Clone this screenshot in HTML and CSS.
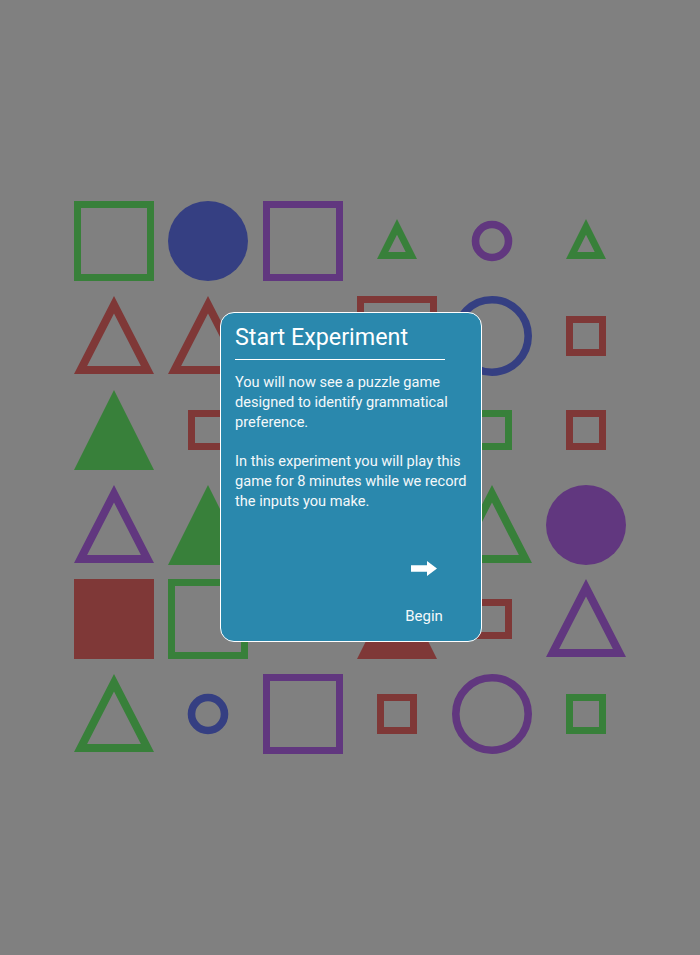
FILE: index.html
```html
<!DOCTYPE html>
<html lang="en">
<head>
<meta charset="utf-8">
<title>Start Experiment</title>
<link rel="stylesheet" href="styles.css">
</head>
<body>
<main class="board">
  <!-- row 1 -->
  <svg class="shape" viewBox="0 0 80 80"><rect class="green-s" x="3.5" y="3.5" width="73" height="73"/></svg>
  <svg class="shape" viewBox="0 0 80 80"><circle class="blue-f" cx="40" cy="40" r="40"/></svg>
  <svg class="shape" viewBox="0 0 80 80"><rect class="purple-s" x="3.5" y="3.5" width="73" height="73"/></svg>
  <svg class="shape" viewBox="0 0 80 80"><path class="green-f" fill-rule="evenodd" d="M20 58L40 18L60 58ZM31.3 51L40 33.7L48.7 51Z"/></svg>
  <svg class="shape" viewBox="0 0 80 80"><circle class="purple-s" cx="40" cy="40" r="16.5"/></svg>
  <svg class="shape" viewBox="0 0 80 80"><path class="green-f" fill-rule="evenodd" d="M20 58L40 18L60 58ZM31.3 51L40 33.7L48.7 51Z"/></svg>
  <!-- row 2 -->
  <svg class="shape" viewBox="0 0 80 80"><path class="red-f" fill-rule="evenodd" d="M0 78L40 0L80 78ZM13.1 70L40 17.5L66.9 70Z"/></svg>
  <svg class="shape" viewBox="0 0 80 80"><path class="red-f" fill-rule="evenodd" d="M0 78L40 0L80 78ZM13.1 70L40 17.5L66.9 70Z"/></svg>
  <svg class="shape" viewBox="0 0 80 80"><circle class="purple-s" cx="40" cy="40" r="16.5"/></svg>
  <svg class="shape" viewBox="0 0 80 80"><rect class="red-s" x="3.5" y="3.5" width="73" height="73"/></svg>
  <svg class="shape" viewBox="0 0 80 80"><circle class="blue-s" cx="40" cy="40" r="36.2"/></svg>
  <svg class="shape" viewBox="0 0 80 80"><rect class="red-s" x="23.5" y="23.5" width="33" height="33"/></svg>
  <!-- row 3 -->
  <svg class="shape" viewBox="0 0 80 80"><path class="green-f" d="M0 80L40 0L80 80Z"/></svg>
  <svg class="shape" viewBox="0 0 80 80"><rect class="red-s" x="23.5" y="23.5" width="33" height="33"/></svg>
  <svg class="shape" viewBox="0 0 80 80"><rect class="blue-f" x="0" y="0" width="80" height="80"/></svg>
  <svg class="shape" viewBox="0 0 80 80"><circle class="green-s" cx="40" cy="40" r="16.5"/></svg>
  <svg class="shape" viewBox="0 0 80 80"><rect class="green-s" x="23.5" y="23.5" width="33" height="33"/></svg>
  <svg class="shape" viewBox="0 0 80 80"><rect class="red-s" x="23.5" y="23.5" width="33" height="33"/></svg>
  <!-- row 4 -->
  <svg class="shape" viewBox="0 0 80 80"><path class="purple-f" fill-rule="evenodd" d="M0 78L40 0L80 78ZM13.1 70L40 17.5L66.9 70Z"/></svg>
  <svg class="shape" viewBox="0 0 80 80"><path class="green-f" d="M0 80L40 0L80 80Z"/></svg>
  <svg class="shape" viewBox="0 0 80 80"><rect class="purple-s" x="23.5" y="23.5" width="33" height="33"/></svg>
  <svg class="shape" viewBox="0 0 80 80"><circle class="red-f" cx="40" cy="40" r="20"/></svg>
  <svg class="shape" viewBox="0 0 80 80"><path class="green-f" fill-rule="evenodd" d="M0 78L40 0L80 78ZM13.1 70L40 17.5L66.9 70Z"/></svg>
  <svg class="shape" viewBox="0 0 80 80"><circle class="purple-f" cx="40" cy="40" r="40"/></svg>
  <!-- row 5 -->
  <svg class="shape" viewBox="0 0 80 80"><rect class="red-f" x="0" y="0" width="80" height="80"/></svg>
  <svg class="shape" viewBox="0 0 80 80"><rect class="green-s" x="3.5" y="3.5" width="73" height="73"/></svg>
  <svg class="shape" viewBox="0 0 80 80"><circle class="blue-s" cx="40" cy="40" r="16.5"/></svg>
  <svg class="shape" viewBox="0 0 80 80"><path class="red-f" d="M0 80L40 0L80 80Z"/></svg>
  <svg class="shape" viewBox="0 0 80 80"><rect class="red-s" x="23.5" y="23.5" width="33" height="33"/></svg>
  <svg class="shape" viewBox="0 0 80 80"><path class="purple-f" fill-rule="evenodd" d="M0 78L40 0L80 78ZM13.1 70L40 17.5L66.9 70Z"/></svg>
  <!-- row 6 -->
  <svg class="shape" viewBox="0 0 80 80"><path class="green-f" fill-rule="evenodd" d="M0 78L40 0L80 78ZM13.1 70L40 17.5L66.9 70Z"/></svg>
  <svg class="shape" viewBox="0 0 80 80"><circle class="blue-s" cx="40" cy="40" r="16.5"/></svg>
  <svg class="shape" viewBox="0 0 80 80"><rect class="purple-s" x="3.5" y="3.5" width="73" height="73"/></svg>
  <svg class="shape" viewBox="0 0 80 80"><rect class="red-s" x="23.5" y="23.5" width="33" height="33"/></svg>
  <svg class="shape" viewBox="0 0 80 80"><circle class="purple-s" cx="40" cy="40" r="36.2"/></svg>
  <svg class="shape" viewBox="0 0 80 80"><rect class="green-s" x="23.5" y="23.5" width="33" height="33"/></svg>
</main>

<div class="overlay">
  <section class="dialog">
    <h2 class="title">Start Experiment</h2>
    <hr class="rule">
    <p class="text">You will now see a puzzle game designed to identify grammatical preference.</p>
    <p class="text">In this experiment you will play this game for 8 minutes while we record the inputs you make.</p>
    <div class="actions">
      <button class="begin" type="button">
        <svg class="arrow" viewBox="0 0 26 15" width="26" height="15"><path d="M0 4.3H16V0L26 7.5L16 15V10.7H0Z"/></svg>
        <span class="begin-label">Begin</span>
      </button>
    </div>
  </section>
</div>
</body>
</html>
```

FILE: styles.css
```css
html, body {
  margin: 0;
  padding: 0;
}

body {
  height: 100vh;
  background: #808080;
  display: flex;
  align-items: center;
  justify-content: center;
  font-family: Roboto, "Liberation Sans", sans-serif;
  overflow: hidden;
}

.board {
  display: grid;
  grid-template-columns: repeat(6, 94.5px);
  grid-template-rows: repeat(6, 94.5px);
  place-items: center;
}

.shape {
  width: 80px;
  height: 80px;
  display: block;
  overflow: visible;
}

.green-s, .blue-s, .purple-s, .red-s {
  fill: none;
  stroke-width: 7;
}
.green-s { stroke: #38803a; }
.blue-s { stroke: #353f82; }
.purple-s { stroke: #61377f; }
.red-s { stroke: #7f3837; }

.green-f { fill: #38803a; }
.blue-f { fill: #353f82; }
.purple-f { fill: #61377f; }
.red-f { fill: #7f3837; }

circle.blue-s, circle.purple-s, circle.green-s { stroke-width: 7.6; }

.overlay {
  position: fixed;
  inset: 0;
  display: flex;
  align-items: center;
  justify-content: center;
}

.dialog {
  box-sizing: border-box;
  width: 262px;
  height: 330px;
  margin: -1px 0 0 2px;
  padding: 11px 14px 16px;
  background: #2a88ad;
  border: 1px solid #ffffff;
  border-radius: 14px;
  color: #ffffff;
  display: flex;
  flex-direction: column;
}

.title {
  margin: 0;
  font-size: 23.3px;
  line-height: 26px;
  font-weight: 400;
}

.rule {
  width: 210px;
  margin: 9px 0 12px;
  border: 0;
  border-top: 1px solid #ffffff;
  height: 0;
}

.text {
  margin: 0 0 19px;
  font-size: 14.6px;
  line-height: 20px;
  color: #f4f8fa;
}

.actions {
  margin-top: auto;
  align-self: flex-end;
  width: 86px;
  display: flex;
  justify-content: center;
}

.begin {
  background: none;
  border: 0;
  padding: 0;
  color: #ffffff;
  font: inherit;
  display: flex;
  flex-direction: column;
  align-items: center;
  gap: 31px;
  cursor: pointer;
}

.arrow {
  display: block;
  fill: #ffffff;
}

.begin-label {
  font-size: 15px;
  line-height: 18px;
  color: #f4f8fa;
}
```
